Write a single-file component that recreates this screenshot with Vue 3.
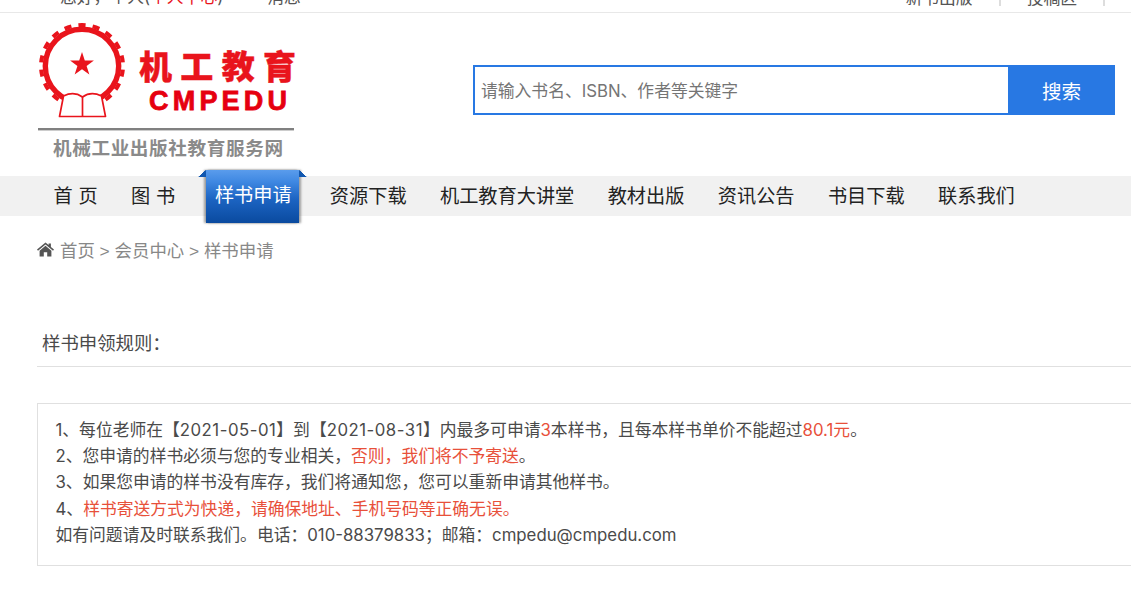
<script setup>
const navItems = ['首 页', '图 书', '样书申请', '资源下载', '机工教育大讲堂', '教材出版', '资讯公告', '书目下载', '联系我们']
const activeItem = '样书申请'
</script>

<template>
  <div class="page">
    <div class="topbar">
      <div class="top-left">
        <span>您好，个人(<em>个人中心</em>)</span>
        <span class="msg">消息</span>
      </div>
      <div class="top-right">
        <span class="top-link">新书出版</span>
        <span class="top-link">投稿区</span>
      </div>
    </div>

    <header class="header">
      <svg class="logo" width="258" height="150" viewBox="38 13 258 150">
        <circle cx="82" cy="66" r="41" fill="none" stroke="#e9141c" stroke-width="4" pathLength="36" stroke-dasharray="1 1" transform="rotate(5 82 66)" />
        <circle cx="82" cy="66" r="36.7" fill="none" stroke="#e9141c" stroke-width="5.4" />
        <polygon points="82,52 84.8,60.6 93.9,60.6 86.6,66 89.35,74.6 82,69.3 74.65,74.6 77.4,66 70.1,60.6 79.2,60.6" fill="#e9141c" />
        <path d="M63.5 96 Q74 91 82.5 97 Q91 91 101.5 96 L105.5 116.5 L59.5 116.5 Z" fill="#fff" stroke="#e9141c" stroke-width="1.7" stroke-linejoin="round" />
        <path d="M82.5 97 V116" stroke="#e9141c" stroke-width="1.7" />
        <text class="logo-cn" x="139" y="79" textLength="157" lengthAdjust="spacing">机工教育</text>
        <text class="logo-en" x="149" y="110" textLength="138" lengthAdjust="spacing">CMPEDU</text>
        <rect x="38" y="128" width="256" height="2.4" fill="#808080" />
        <text class="logo-sub" x="53" y="155" textLength="230" lengthAdjust="spacing">机械工业出版社教育服务网</text>
      </svg>
      <form class="search" @submit.prevent>
        <input class="search-input" type="text" placeholder="请输入书名、ISBN、作者等关键字" />
        <button class="search-btn" type="button">搜索</button>
      </form>
    </header>

    <nav class="nav">
      <a v-for="item in navItems" :key="item" class="nav-item" :class="{ active: item === activeItem }">
        <span class="nav-label">{{ item }}</span>
      </a>
    </nav>

    <div class="crumbs">
      <svg class="home" width="17" height="15" viewBox="0 0 17 15">
        <path d="M8.5 0.5 L11.6 3.1 V1.4 H13.9 V5 L17 7.6 L16 8.8 L8.5 2.6 L1 8.8 L0 7.6 Z" fill="#555" />
        <path d="M8.5 3.8 L14.4 8.7 V14.6 H10.2 V10.2 H6.8 V14.6 H2.6 V8.7 Z" fill="#555" />
      </svg>
      <span>首页 &gt; 会员中心 &gt; 样书申请</span>
    </div>

    <h2 class="rules-title">样书申领规则：</h2>

    <div class="rules">
      <p>1、每位老师在【<span class="date">2021-05-01</span>】到【<span class="date">2021-08-31</span>】内最多可申请<em>3</em>本样书，且每本样书单价不能超过<em>80.1元</em>。</p>
      <p>2、您申请的样书必须与您的专业相关，<em>否则，我们将不予寄送</em>。</p>
      <p>3、如果您申请的样书没有库存，我们将通知您，您可以重新申请其他样书。</p>
      <p>4、<em>样书寄送方式为快递，请确保地址、手机号码等正确无误。</em></p>
      <p>如有问题请及时联系我们。电话：010-88379833；邮箱：cmpedu@cmpedu.com</p>
    </div>
  </div>
</template>

<style>
html, body { margin: 0; background: #fff; overflow: hidden; }
</style>

<style scoped>
.page {
  width: 1131px;
  height: 592px;
  overflow: hidden;
  font-family: Inter, "Noto Sans CJK SC", sans-serif;
  color: #4a4a4a;
}
em { font-style: normal; }

.topbar {
  height: 12px;
  border-bottom: 1px solid #e8e8e8;
  display: flex;
  justify-content: space-between;
  align-items: flex-end;
  overflow: hidden;
  font-size: 16.8px;
  line-height: 20px;
  color: #555;
}
.top-left { display: flex; padding-left: 60px; margin-bottom: 5px; flex: none; }
.top-left em { color: #e9141c; }
.msg { margin-left: 44px; }
.top-right { display: flex; margin-right: 26px; margin-bottom: 6px; flex: none; }
.top-link {
  padding: 0 26px;
  height: 20px;
  border-right: 2px solid #ddd;
  line-height: 24px;
}

.header {
  height: 163px;
  display: flex;
  align-items: flex-start;
  padding: 0 16px 0 38px;
}
.logo { display: block; flex: none; }
.logo-cn { font: 900 33px "Noto Sans CJK SC", sans-serif; fill: #e9141c; stroke: #e9141c; stroke-width: .4px; }
.logo-en { font: 700 27px "Liberation Sans", sans-serif; fill: #e6000f; stroke: #e6000f; stroke-width: .8px; }
.logo-sub { font: 700 18.6px "Noto Sans CJK SC", sans-serif; fill: #8a8a8a; }

.search {
  margin: 52px 0 0 auto;
  width: 642px;
  height: 50px;
  display: flex;
  box-sizing: border-box;
  border: 2px solid #2878e3;
}
.search-input {
  flex: 1;
  min-width: 0;
  border: 0;
  outline: 0;
  padding: 1px 6px 0;
  font: 16.8px Inter, "Noto Sans CJK SC", sans-serif;
  color: #444;
}
.search-input::placeholder { color: #757575; opacity: 1; }
.search-btn {
  width: 105px;
  border: 0;
  padding: 0 0 0 2px;
  background: #2878e3;
  color: #fff;
  font: 19.6px "Noto Sans CJK SC", sans-serif;
}

.nav {
  height: 40px;
  background: #f1f1f1;
  display: flex;
  padding-left: 36.8px;
}
.nav-item {
  position: relative;
  padding: 0 16.7px;
  line-height: 39px;
  font-size: 19.2px;
  word-spacing: 1.5px;
  color: #222;
  white-space: nowrap;
  font-family: "Noto Sans CJK SC", sans-serif;
}
.nav-label { position: relative; z-index: 1; }
.nav-item.active { color: #fff; padding: 0 21.5px 0 23px; }
.nav-item.active .nav-label { top: -1px; }
.nav-item.active::before {
  content: "";
  position: absolute;
  left: 14.5px;
  right: 14.5px;
  top: -6px;
  bottom: -7px;
  background: linear-gradient(#5a9cec 0%, #3f88e2 22%, #1c64c2 55%, #0a4a9f 100%);
  box-shadow: 2px 0 2px rgba(90, 90, 90, .55), -2px 0 2px rgba(90, 90, 90, .55);
}
.nav-item.active::after {
  content: "";
  position: absolute;
  left: 6.5px;
  right: 6.5px;
  top: -6px;
  height: 7px;
  background:
    linear-gradient(to bottom right, transparent 49%, #1258b0 51%) left top / 8px 7px no-repeat,
    linear-gradient(to bottom left, transparent 49%, #1258b0 51%) right top / 8px 7px no-repeat;
}

.crumbs {
  display: flex;
  align-items: center;
  gap: 6px;
  margin: 24px 0 0 37px;
  height: 22px;
  font-size: 17.4px;
  line-height: 22px;
  color: #888;
  font-family: "Liberation Sans", "Noto Sans CJK SC", sans-serif;
}
.home { flex: none; margin-top: -3px; }

.rules-title {
  margin: 61px 0 0 37px;
  height: 43px;
  padding-left: 5px;
  border-bottom: 1px solid #e0e0e0;
  font-size: 18.4px;
  font-weight: 400;
  line-height: 41px;
  color: #4a4a4a;
  font-family: "Liberation Sans", "Noto Sans CJK SC", sans-serif;
}

.rules {
  margin: 36px -10px 0 37px;
  height: 163px;
  box-sizing: border-box;
  border: 1px solid #e0e0e0;
  padding: 12.5px 17.5px;
  font-size: 16.8px;
  line-height: 26.4px;
  white-space: nowrap;
}
.rules p { margin: 0; }
.rules em { color: #e8503a; }
.date { letter-spacing: .5px; }
</style>
